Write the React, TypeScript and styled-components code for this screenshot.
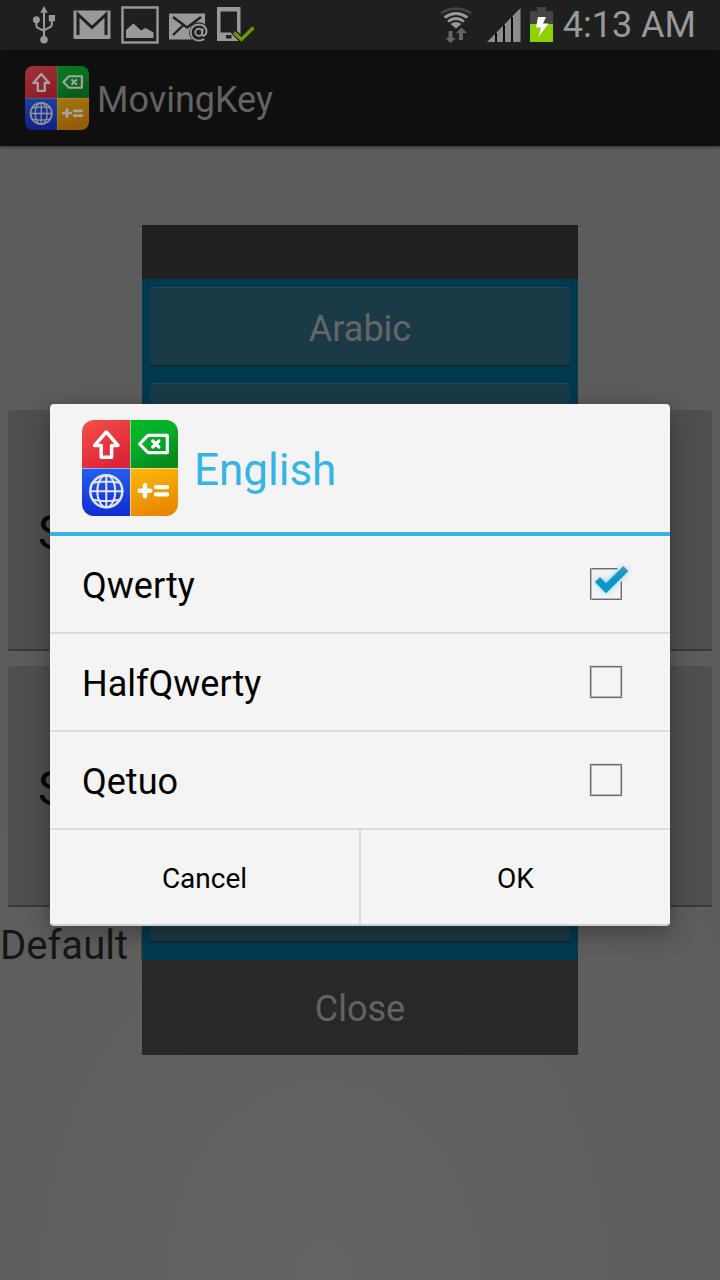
import React, { useState } from "react";
import styled, { createGlobalStyle } from "styled-components";

const GlobalStyle = createGlobalStyle`
  *, *::before, *::after { box-sizing: border-box; }
  body {
    margin: 0;
    font-family: Roboto, "Liberation Sans", sans-serif;
    background: #5c5c5c;
  }
  button { font-family: inherit; margin: 0; border: 0; padding: 0; cursor: pointer; }
`;

const Screen = styled.div`
  position: relative;
  display: flex;
  flex-direction: column;
  min-height: 100vh;
  background: radial-gradient(ellipse 70% 50% at 45% 100%, #646464, #5c5c5c);
`;

const StatusBar = styled.header`
  display: flex;
  align-items: center;
  justify-content: space-between;
  height: 50px;
  padding: 0 24px 0 20px;
  background: #1f1f1f;
`;

const Notifications = styled.div`
  display: grid;
  grid-auto-flow: column;
  grid-auto-columns: 48px;
  place-items: center;
`;

const SystemIcons = styled.div`
  display: flex;
  align-items: center;
  gap: 9px;
`;

const Clock = styled.span`
  font-size: 36px;
  line-height: 50px;
  color: #999;
`;

const ActionBar = styled.div`
  display: flex;
  align-items: center;
  gap: 8px;
  height: 96px;
  padding: 0 25px;
  background: #0f0f0f;
  box-shadow: 0 1px 3px rgba(0, 0, 0, 0.5);
`;

const AppTitle = styled.h1`
  margin: 0;
  padding-top: 4px;
  font-size: 36px;
  line-height: 48px;
  font-weight: 400;
  color: #636363;
`;

const Dimmed = styled.span`
  display: flex;
  opacity: 0.62;
`;

const Content = styled.main`
  display: flex;
  flex-direction: column;
  padding-top: 264px;
`;

const SetupButton = styled.button`
  height: 241px;
  margin: 0 8px 15px;
  padding: 6px 30px 0;
  border-radius: 2px;
  border-bottom: 2px solid #383838;
  background: #4f4f4f;
  font-size: 48px;
  line-height: 56px;
  color: #060606;
  text-align: left;
`;

const DefaultLabel = styled.p`
  margin: 0;
  padding-top: 2px;
  font-size: 40px;
  line-height: 44px;
  color: #161616;
  white-space: nowrap;
`;

const Overlay = styled.div`
  position: absolute;
  inset: 0;
  display: flex;
  align-items: center;
  justify-content: center;
`;

const DialogOverlay = styled(Overlay)`
  top: 50px;
`;

const LanguagePanel = styled.section`
  width: 100%;
  max-width: 436px;
  background: #003a50;
`;

const PanelHeader = styled.div`
  height: 54px;
  background: #202020;
`;

const LanguageList = styled.div`
  display: flex;
  flex-direction: column;
  gap: 16px;
  padding: 8px 8px 17px;
`;

const LanguageButton = styled.button`
  height: 80px;
  padding-top: 4px;
  border-radius: 2px;
  border-top: 1px solid #2b4753;
  border-bottom: 2px solid #122a34;
  background: #1a3a47;
  font-size: 36px;
  line-height: 48px;
  color: #666;
`;

const CloseButton = styled.button`
  display: block;
  width: 100%;
  height: 95px;
  padding-top: 2px;
  background: #282828;
  font-size: 36px;
  line-height: 48px;
  color: #636363;
`;

const Dialog = styled.section`
  width: calc(100% - 100px);
  overflow: hidden;
  border-radius: 4px;
  border-bottom: 2px solid #cfcfcf;
  background: #f4f4f4;
  box-shadow: 0 6px 24px rgba(0, 0, 0, 0.35);
`;

const DialogHeader = styled.div`
  display: flex;
  align-items: center;
  gap: 16px;
  height: 132px;
  padding: 0 32px;
  border-bottom: 4px solid #33b5e5;
`;

const DialogTitle = styled.h2`
  margin: 0;
  padding-top: 4px;
  font-size: 44px;
  line-height: 52px;
  font-weight: 400;
  color: #33b5e5;
`;

const OptionRow = styled.label`
  display: flex;
  align-items: center;
  justify-content: space-between;
  height: 98px;
  padding: 0 48px 0 32px;
  border-bottom: 2px solid #dadada;
`;

const OptionName = styled.span`
  padding-top: 4px;
  font-size: 36px;
  line-height: 48px;
  color: #000;
`;

const BoxWrap = styled.span`
  position: relative;
  display: flex;
`;

const Box = styled.input`
  appearance: none;
  width: 32px;
  height: 32px;
  margin: 0;
  border: 1px solid #6c6a6b;
  box-shadow: inset 0 0 0 1px #b9b7b8, 0 0 0 1px #e6e6e6;
  &:checked { border-color: transparent; box-shadow: none; }
`;

const TickArt = styled.svg`
  position: absolute;
  inset: 0;
  overflow: visible;
  pointer-events: none;
`;

const DialogActions = styled.div`
  display: grid;
  grid-template-columns: 1fr 1fr;
  gap: 2px;
  background: #dadada;
`;

const DialogButton = styled.button`
  height: 94px;
  padding-top: 4px;
  background: #f4f4f4;
  font-size: 28px;
  line-height: 36px;
  color: #000;
`;

function AppIcon({ size, id }: { size: number; id: string }) {
  return (
    <svg width={size} height={size} viewBox="0 0 96 96" aria-hidden="true">
      <defs>
        <clipPath id={`${id}-clip`}><rect width="96" height="96" rx="12" /></clipPath>
        <linearGradient id={`${id}-r`} x1="0" y1="0" x2="0.6" y2="1"><stop stopColor="#f5504c" /><stop offset="1" stopColor="#dc2436" /></linearGradient>
        <linearGradient id={`${id}-g`} x1="0" y1="0" x2="0.5" y2="1"><stop stopColor="#00bb22" /><stop offset="0.5" stopColor="#06ae29" /><stop offset="1" stopColor="#078a1c" /></linearGradient>
        <linearGradient id={`${id}-b`} x1="0" y1="0" x2="0" y2="1"><stop stopColor="#255ff0" /><stop offset="1" stopColor="#0f2cd4" /></linearGradient>
        <linearGradient id={`${id}-y`} x1="0" y1="0" x2="0.3" y2="1"><stop stopColor="#ffb90a" /><stop offset="1" stopColor="#e88a00" /></linearGradient>
      </defs>
      <g clipPath={`url(#${id}-clip)`}>
        <rect width="48" height="48" fill={`url(#${id}-r)`} />
        <rect x="48" width="48" height="48" fill={`url(#${id}-g)`} />
        <rect y="48" width="48" height="48" fill={`url(#${id}-b)`} />
        <rect x="48" y="48" width="48" height="48" fill={`url(#${id}-y)`} />
        <path d="M48.5 0V96M0 48.5H96" stroke="#fff" strokeOpacity="0.5" strokeWidth="1" />
      </g>
      <g fill="none" stroke="#fff" strokeLinejoin="round" strokeLinecap="round">
        <path d="M24.3 12L36 25.4H29.6V37.3H19.2V25.4H12.6Z" strokeWidth="3.5" />
        <path d="M57.6 24L66 15.4H85.3V32.6H66Z" strokeWidth="3.2" />
        <path d="M70.7 21L76.9 27M76.9 21L70.7 27" strokeWidth="3.2" />
        <path d="M57.6 70.7H68.4M63 65.2V76.3" strokeWidth="4.4" />
        <path d="M73.8 67.2H85.2M73.8 74.4H85.2" strokeWidth="4.2" />
        <g stroke="#e3e5ee" strokeWidth="2">
          <circle cx="24.3" cy="71.2" r="16" strokeWidth="2.5" />
          <ellipse cx="24.3" cy="71.2" rx="9" ry="16" />
          <path d="M24.3 55V87.5M8 71.2H40.6M11 62.8Q24.3 60 37.6 62.8M11 79.8Q24.3 82.6 37.6 79.8" />
        </g>
      </g>
    </svg>
  );
}

function UsbIcon() {
  return (
    <svg width="24" height="38" viewBox="0 0 24 40" aria-hidden="true">
      <g fill="#999">
        <path d="M12 0L16 7H8Z" />
        <circle cx="12" cy="35.5" r="4" />
        <circle cx="4" cy="14.5" r="3.7" />
        <rect x="17" y="9.5" width="6.6" height="6.6" />
      </g>
      <path d="M12 5V34M4 16V20.5Q4 22.5 6 23.3L12 26M20.2 15V19.5Q20.2 21.3 18.4 22.3L12 25.5" fill="none" stroke="#999" strokeWidth="2.2" />
    </svg>
  );
}

function GmailIcon() {
  return (
    <svg width="38" height="30" viewBox="0 0 38 30" aria-hidden="true">
      <rect x="0.5" y="0.5" width="37" height="28.5" rx="1" fill="#999" />
      <path d="M5 25V4.5L19 17.5L33 4.5V25" fill="none" stroke="#1f1f1f" strokeWidth="3" />
    </svg>
  );
}

function PictureIcon() {
  return (
    <svg width="38" height="38" viewBox="0 0 38 38" aria-hidden="true">
      <rect x="1.5" y="1.5" width="35" height="35" fill="none" stroke="#999" strokeWidth="2.4" />
      <path d="M5 32V24L12.5 17.5L20 24.5L24.5 22L32.5 26.5V32Z" fill="#999" />
    </svg>
  );
}

function MailIcon() {
  return (
    <svg width="40" height="36" viewBox="0 0 40 36" aria-hidden="true">
      <rect x="1" y="6.5" width="36" height="26" fill="#999" />
      <path d="M5 10L19 20.5L33 10M5 28L15 18.5" fill="none" stroke="#1f1f1f" strokeWidth="2.4" />
      <circle cx="31" cy="25.3" r="10" fill="#1f1f1f" />
      <g fill="none" stroke="#999" strokeWidth="1.9">
        <circle cx="30.8" cy="25.3" r="3.5" />
        <path d="M34.8 21.4L34 27Q34.1 29.2 36 28.6Q38.9 27 38.5 23.8Q37.4 17.6 31 17.5Q22.9 18 22.7 25.5Q23.4 33.4 31 33.6Q34.3 33.5 36.2 32" />
      </g>
    </svg>
  );
}

function PhoneCheckIcon() {
  return (
    <svg width="38" height="36" viewBox="0 0 38 36" aria-hidden="true">
      <path fillRule="evenodd" d="M0 0H23.5V34H0ZM3.5 4.5V25.5H20V4.5ZM9 28V31.5H14.5V28Z" fill="#999" />
      <path d="M16 24L25 33L37 19.5" fill="none" stroke="#1f1f1f" strokeWidth="6" />
      <path d="M17 25.5L24.5 32.5L36.5 20.5" fill="none" stroke="#679a08" strokeWidth="3.4" />
    </svg>
  );
}

function WifiIcon() {
  return (
    <svg width="38" height="36" viewBox="0 0 38 36" aria-hidden="true">
      <g fill="none" strokeWidth="2.8">
        <path d="M1 6.2Q16 -3 31 6.2" stroke="#444" />
        <path d="M4.5 10.5Q16 2.5 27.5 10.5M8 14.5Q16 8.5 24 14.5" stroke="#999" />
      </g>
      <path d="M10.5 17Q16 12.8 21.5 17L16 21.5Z" fill="#999" />
      <path d="M8.5 24H12.5V31H16L10.5 36L5.5 31H8.5ZM19 33V26H16L21.5 20.5L27 26H23V33Z" fill="#666" />
    </svg>
  );
}

function SignalIcon() {
  return (
    <svg width="34" height="34" viewBox="0 0 34 34" aria-hidden="true">
      <path d="M0 34L33.5 0V34Z" fill="#8b8b8b" />
      <path d="M9 25V34M17 17V34M25 9V34" stroke="#0a0a0a" strokeWidth="2" />
    </svg>
  );
}

function BatteryIcon() {
  return (
    <svg width="24" height="36" viewBox="0 0 24 36" aria-hidden="true">
      <path d="M7 0H16V4H23V17H0V4H7Z" fill="#444" />
      <rect y="17" width="23" height="18" fill="#91d100" />
      <path d="M8 10H16L13 16.5H18.5L8.5 30L11 20.5H6Z" fill="#fff" />
    </svg>
  );
}

function CheckedArt() {
  return (
    <TickArt width="32" height="32" viewBox="0 0 32 32" aria-hidden="true">
      <defs>
        <linearGradient id="tick" x1="0" y1="0" x2="0" y2="1">
          <stop stopColor="#2d9ac0" />
          <stop offset="0.5" stopColor="#0699cf" />
        </linearGradient>
        <filter id="glow" x="-50%" y="-50%" width="200%" height="200%">
          <feGaussianBlur stdDeviation="3" />
        </filter>
      </defs>
      <path d="M5.3 14L10 9.5L16 15.4L33.3 -1.5L38 3.2L16 25Z" fill="#33b5e5" opacity="0.6" filter="url(#glow)" />
      <path d="M27.5 0.5H0.5V31.5H31.5V13.5" fill="none" stroke="#6c6a6b" strokeWidth="1" />
      <path d="M27.5 1.5H1.5V30.5H30.5V13.5" fill="none" stroke="#b9b7b8" strokeWidth="1" />
      <path d="M5.3 14L10 9.5L16 15.4L33.3 -1.5L38 3.2L16 25Z" fill="url(#tick)" stroke="#4a93b0" strokeWidth="0.8" />
    </TickArt>
  );
}

const languages = ["Arabic", "", "", "", "", "", ""];
const layouts = ["Qwerty", "HalfQwerty", "Qetuo"];

export default function App() {
  const [chosen, setChosen] = useState<string[]>(["Qwerty"]);
  const toggle = (name: string) =>
    setChosen((now) => (now.includes(name) ? now.filter((n) => n !== name) : [...now, name]));

  return (
    <>
      <GlobalStyle />
      <Screen>
        <StatusBar>
          <Notifications>
            <UsbIcon />
            <GmailIcon />
            <PictureIcon />
            <MailIcon />
            <PhoneCheckIcon />
          </Notifications>
          <SystemIcons>
            <WifiIcon />
            <SignalIcon />
            <BatteryIcon />
            <Clock>4:13 AM</Clock>
          </SystemIcons>
        </StatusBar>
        <ActionBar>
          <Dimmed><AppIcon size={64} id="bar" /></Dimmed>
          <AppTitle>MovingKey</AppTitle>
        </ActionBar>
        <Content>
          <SetupButton type="button">S</SetupButton>
          <SetupButton type="button">S</SetupButton>
          <DefaultLabel>Default I</DefaultLabel>
        </Content>

        <Overlay>
          <LanguagePanel>
            <PanelHeader />
            <LanguageList>
              {languages.map((name, i) => (
                <LanguageButton key={i} type="button" aria-label={name || `Language ${i + 1}`}>
                  {name}
                </LanguageButton>
              ))}
            </LanguageList>
            <CloseButton type="button">Close</CloseButton>
          </LanguagePanel>
        </Overlay>

        <DialogOverlay>
          <Dialog role="dialog" aria-labelledby="dialog-title">
            <DialogHeader>
              <AppIcon size={96} id="dialog" />
              <DialogTitle id="dialog-title">English</DialogTitle>
            </DialogHeader>
            {layouts.map((name) => (
              <OptionRow key={name}>
                <OptionName>{name}</OptionName>
                <BoxWrap>
                  <Box type="checkbox" checked={chosen.includes(name)} onChange={() => toggle(name)} />
                  {chosen.includes(name) && <CheckedArt />}
                </BoxWrap>
              </OptionRow>
            ))}
            <DialogActions>
              <DialogButton type="button">Cancel</DialogButton>
              <DialogButton type="button">OK</DialogButton>
            </DialogActions>
          </Dialog>
        </DialogOverlay>
      </Screen>
    </>
  );
}
